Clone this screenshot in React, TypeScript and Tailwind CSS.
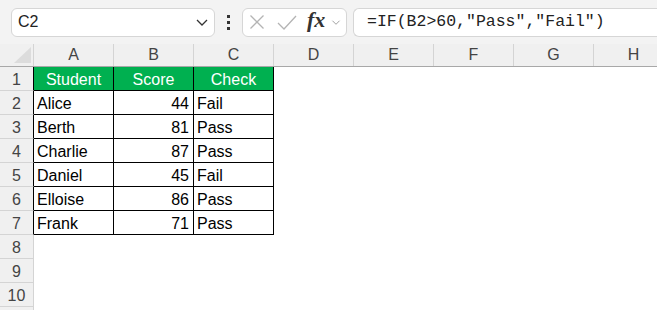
import React from 'react';

const cols = ['A', 'B', 'C', 'D', 'E', 'F', 'G', 'H'];

const data: [string, string, string][] = [
  ['Alice', '44', 'Fail'],
  ['Berth', '81', 'Pass'],
  ['Charlie', '87', 'Pass'],
  ['Daniel', '45', 'Fail'],
  ['Elloise', '86', 'Pass'],
  ['Frank', '71', 'Pass'],
];

const Chevron = ({ className }: { className?: string }) => (
  <svg className={className} viewBox="0 0 12 7" fill="none" stroke="currentColor" strokeWidth={1.3}>
    <path d="M1 1l5 5 5-5" />
  </svg>
);

const FormulaBar = () => (
  <div className="h-[44px] bg-[#f3f3f3] flex items-center">
    {/* Name box */}
    <div className="ml-[11px] w-[204px] h-[29px] bg-white border border-[#d6d6d6] rounded-[6px] flex items-center pl-[6px] pr-[6px]">
      <span className="text-[16px] text-[#222]">C2</span>
      <Chevron className="ml-auto w-[12px] h-[7px] text-[#333]" />
    </div>

    {/* dots */}
    <div className="w-[27px] flex flex-col items-center gap-[3px]">
      <div className="w-[3px] h-[3px] bg-[#333]" />
      <div className="w-[3px] h-[3px] bg-[#333]" />
      <div className="w-[3px] h-[3px] bg-[#333]" />
    </div>

    {/* cancel / enter / fx */}
    <div className="w-[105px] h-[29px] bg-white border border-[#d6d6d6] rounded-[6px] flex items-center pl-[6px]">
      <svg className="w-[16px] h-[14px] text-[#b4b4b4]" viewBox="0 0 16 14" fill="none" stroke="currentColor" strokeWidth={1.3}>
        <path d="M1.5 0.5l13 13M14.5 0.5l-13 13" />
      </svg>
      <svg className="ml-[12px] w-[20px] h-[15px] text-[#b4b4b4]" viewBox="0 0 20 15" fill="none" stroke="currentColor" strokeWidth={1.3}>
        <path d="M1 8l6 6L19 1" />
      </svg>
      <span className="ml-[10px] text-[22px] leading-none italic font-bold text-[#333] -mt-[4px]" style={{ fontFamily: '"Liberation Serif", serif' }}>
        fx
      </span>
      <Chevron className="ml-[6px] w-[10px] h-[5px] text-[#999]" />
    </div>

    {/* formula box */}
    <div className="ml-[6px] flex-1 h-[29px] bg-white border border-r-0 border-[#d6d6d6] rounded-l-[6px] flex items-center pl-[13px]">
      <span className="text-[16.5px] text-[#222]" style={{ fontFamily: '"Liberation Mono", monospace' }}>
        =IF(B2&gt;60,"Pass","Fail")
      </span>
    </div>
  </div>
);

export default function App() {
  return (
    <div className="w-[657px] h-[310px] overflow-hidden bg-white" style={{ fontFamily: '"Liberation Sans", Arial, sans-serif' }}>
      <FormulaBar />

      {/* column headers */}
      <div className="flex h-[23px] bg-[#f0f0f0] border-b border-[#a8a8a8]">
        <div className="w-[34px] shrink-0 relative border-r border-[#d4d4d4]">
          <svg className="absolute left-[14px] top-[3px] w-[17px] h-[16px]" viewBox="0 0 17 16">
            <path d="M17 0V16H0Z" fill="#dcdcdc" />
          </svg>
        </div>
        {cols.map((c) => (
          <div key={c} className="w-[80px] shrink-0 border-r border-[#d4d4d4] flex items-center justify-center text-[16px] text-[#444]">
            {c}
          </div>
        ))}
      </div>

      {/* header row */}
      <div className="flex h-[24px]">
        <div className="w-[34px] shrink-0 bg-[#f0f0f0] border-r border-b border-r-black border-b-[#d4d4d4] flex items-center justify-center pt-[3px] text-[16px] text-[#444]">
          1
        </div>
        {['Student', 'Score', 'Check'].map((h) => (
          <div key={h} className="w-[80px] shrink-0 bg-[#00b050] border-r border-b border-black flex items-center justify-center pt-[2px] text-[16px] text-white">
            {h}
          </div>
        ))}
      </div>

      {/* data rows */}
      {data.map(([name, score, check], i) => (
        <div key={name} className="flex h-[24px]">
          <div className="w-[34px] shrink-0 bg-[#f0f0f0] border-r border-b border-r-black border-b-[#d4d4d4] flex items-center justify-center pt-[3px] text-[16px] text-[#444]">
            {i + 2}
          </div>
          <div className="w-[80px] shrink-0 border-r border-b border-black flex items-center pl-[3px] pt-[2px] text-[16px] text-black">{name}</div>
          <div className="w-[80px] shrink-0 border-r border-b border-black flex items-center justify-end pr-[4px] pt-[2px] text-[16px] text-black">{score}</div>
          <div className="w-[80px] shrink-0 border-r border-b border-black flex items-center pl-[3px] pt-[2px] text-[16px] text-black">{check}</div>
        </div>
      ))}

      {/* empty rows */}
      {[8, 9, 10].map((n) => (
        <div key={n} className="flex h-[24px]">
          <div className="w-[34px] shrink-0 bg-[#f0f0f0] border-r border-b border-[#d4d4d4] flex items-center justify-center pt-[3px] text-[16px] text-[#444]">
            {n}
          </div>
        </div>
      ))}
      <div className="flex h-[24px]">
        <div className="w-[34px] shrink-0 bg-[#f0f0f0] border-r border-[#d4d4d4]" />
      </div>
    </div>
  );
}
